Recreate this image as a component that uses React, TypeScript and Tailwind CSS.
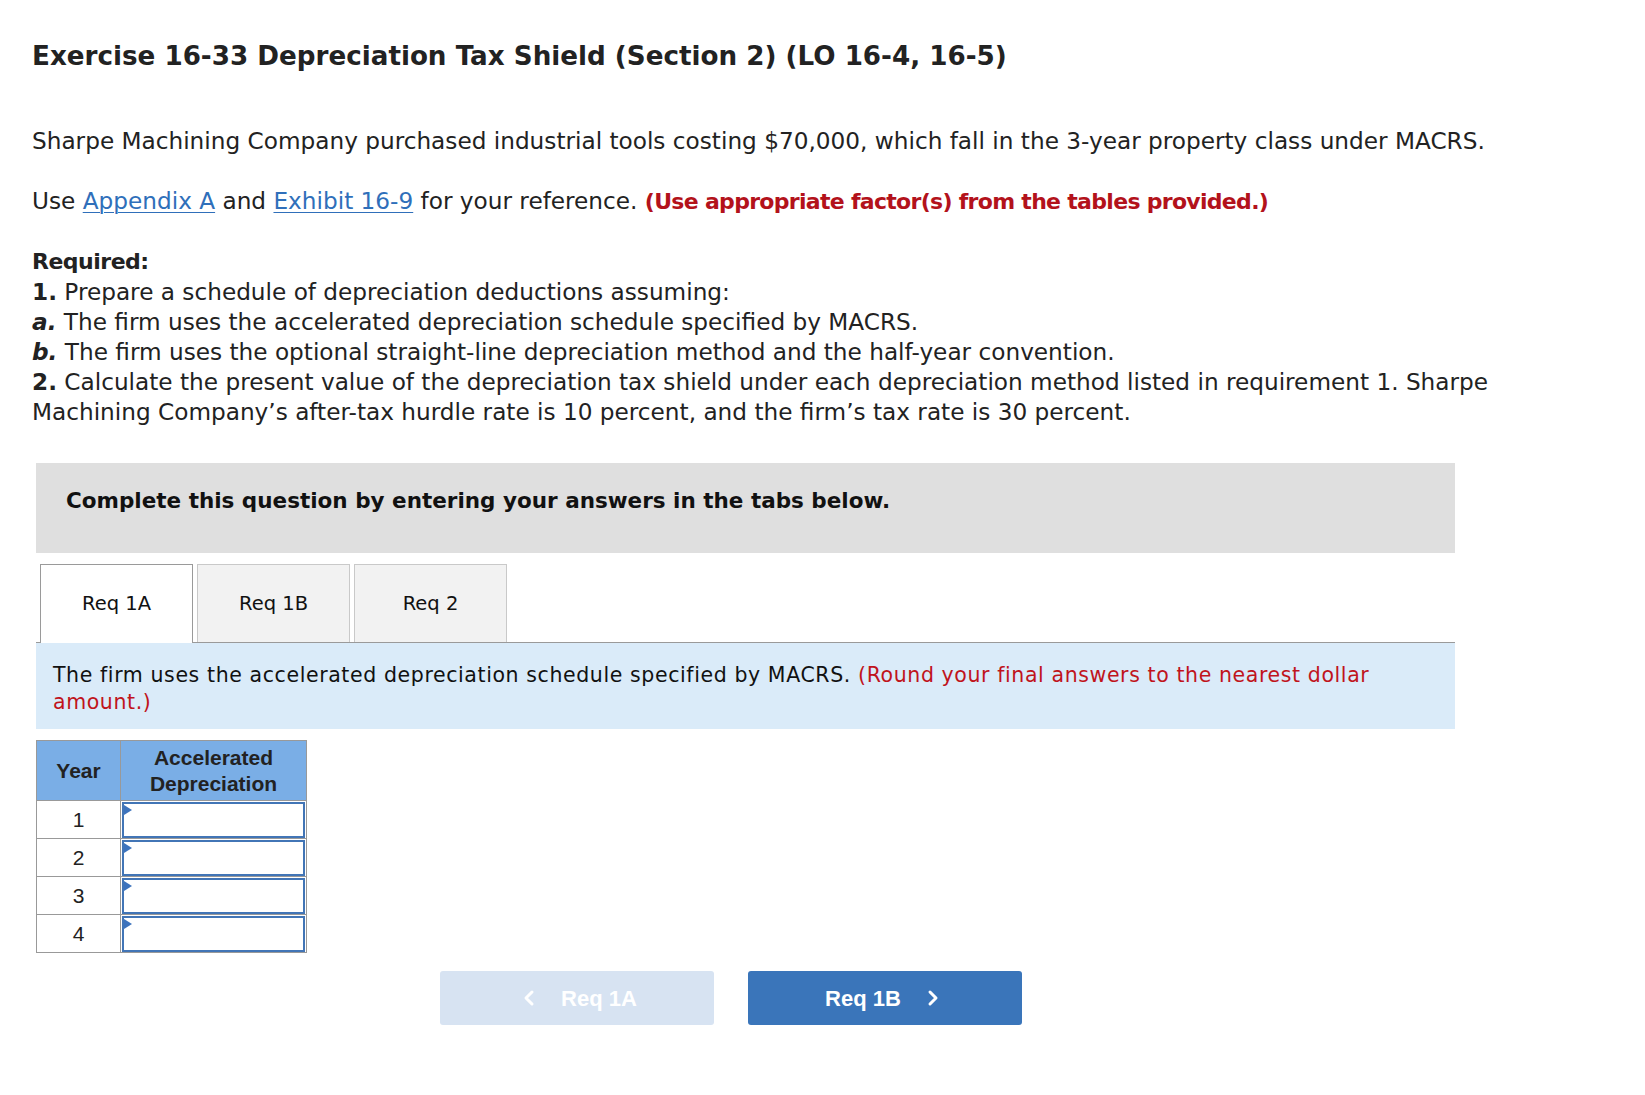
import React from "react";
import { ChevronLeft, ChevronRight } from "lucide-react";

const body = { fontFamily: "'DejaVu Sans', 'Open Sans', sans-serif" } as React.CSSProperties;

function Tab({ label, active }: { label: string; active?: boolean }) {
  if (active) {
    return (
      <div className="-mb-px flex h-[79px] w-[153px] items-center justify-center border-x border-t border-[#9a9a9a] bg-white text-[19.5px] text-[#111] font-['DejaVu_Sans',sans-serif]">
        {label}
      </div>
    );
  }
  return (
    <div className="flex h-[78px] w-[153px] items-center justify-center border-x border-t border-[#c9c9c9] bg-[#f2f2f2] text-[19.5px] text-[#111] font-['DejaVu_Sans',sans-serif]">
      {label}
    </div>
  );
}

function InputCell() {
  return (
    <td className="h-[38px] w-[186px] border border-[#999] p-0">
      <div className="relative mx-[1px] h-[36px] border-2 border-[#4275b6] bg-white">
        <div className="absolute left-0 top-[1px] h-0 w-0 border-y-[5px] border-l-[8px] border-y-transparent border-l-[#3d73bd]" />
      </div>
    </td>
  );
}

export default function App() {
  return (
    <div className="min-h-[1095px] bg-white pl-[32px] text-[#222]">
      <h1
        className="pt-[38px] text-[26.2px] font-bold leading-[36px] text-[#222]"
        style={body}
      >
        Exercise 16-33 Depreciation Tax Shield (Section 2) (LO 16-4, 16-5)
      </h1>

      <div className="w-[1500px] text-[23.2px] leading-[30px]" style={body}>
        <p className="mt-[52px]">
          Sharpe Machining Company purchased industrial tools costing $70,000, which fall in the 3-year property class under MACRS.
        </p>
        <p className="mt-[30px]">
          Use{" "}
          <span className="text-[#2f6fba] underline decoration-1 underline-offset-[3px]">Appendix A</span> and{" "}
          <span className="text-[#2f6fba] underline decoration-1 underline-offset-[3px]">Exhibit 16-9</span> for your reference.{" "}
          <b className="text-[22px] tracking-[-0.7px] text-[#b3121b]">(Use appropriate factor(s) from the tables provided.)</b>
        </p>
        <div className="mt-[30px]">
          <div className="text-[22px] font-bold tracking-[-0.5px]">Required:</div>
          <div>
            <b>1.</b> Prepare a schedule of depreciation deductions assuming:
          </div>
          <div>
            <b className="italic">a.</b> The firm uses the accelerated depreciation schedule specified by MACRS.
          </div>
          <div>
            <b className="italic">b.</b> The firm uses the optional straight-line depreciation method and the half-year convention.
          </div>
          <div>
            <b>2.</b> Calculate the present value of the depreciation tax shield under each depreciation method listed in requirement 1. Sharpe Machining Company’s after-tax hurdle rate is 10 percent, and the firm’s tax rate is 30 percent.
          </div>
        </div>
      </div>

      <div className="ml-[4px] mt-[36px] w-[1419px]">
        <div className="h-[90px] bg-[#dfdfdf] pl-[30px] pt-[24px]">
          <div className="text-[21.5px] font-bold leading-[28px] text-[#111] font-['DejaVu_Sans',sans-serif]">
            Complete this question by entering your answers in the tabs below.
          </div>
        </div>

        <div className="mt-[11px] flex gap-[4px] border-b border-[#9a9a9a] pl-[4px]">
          <Tab label="Req 1A" active />
          <Tab label="Req 1B" />
          <Tab label="Req 2" />
        </div>

        <div className="h-[86px] bg-[#daebf9] px-[17px] pt-[19px] text-[20.5px] leading-[27px] tracking-[0.6px] text-[#111] font-['DejaVu_Sans',sans-serif]">
          The firm uses the accelerated depreciation schedule specified by MACRS.{" "}
          <span className="text-[#c0141c]">(Round your final answers to the nearest dollar amount.)</span>
        </div>

        <table className="mt-[11px] border-collapse border border-[#999] text-[21px] font-['Liberation_Sans',Arial,sans-serif]">
          <thead>
            <tr className="h-[60px] bg-[#7aaee6] text-[#222]">
              <th className="w-[84px] border border-[#999] p-0 text-center font-bold leading-[26px]">Year</th>
              <th className="w-[186px] border border-[#999] p-0 text-center font-bold leading-[26px]">
                Accelerated
                <br />
                Depreciation
              </th>
            </tr>
          </thead>
          <tbody>
            {[1, 2, 3, 4].map((y) => (
              <tr key={y} className="h-[38px]">
                <td className="border border-[#999] p-0 text-center leading-[36px] text-[#222]">{y}</td>
                <InputCell />
              </tr>
            ))}
          </tbody>
        </table>

        <div className="mt-[18px] flex gap-[34px] pl-[404px] font-['Liberation_Sans',Arial,sans-serif]">
          <div className="flex h-[54px] w-[274px] items-center justify-center gap-[20px] rounded-[3px] bg-[#d7e3f2] text-[22px] font-bold text-white">
            <ChevronLeft size={24} strokeWidth={3} />
            <span>Req 1A</span>
          </div>
          <div className="flex h-[54px] w-[274px] items-center justify-center gap-[20px] rounded-[3px] bg-[#3a75ba] text-[22px] font-bold text-white">
            <span>Req 1B</span>
            <ChevronRight size={24} strokeWidth={3} />
          </div>
        </div>
      </div>
    </div>
  );
}
